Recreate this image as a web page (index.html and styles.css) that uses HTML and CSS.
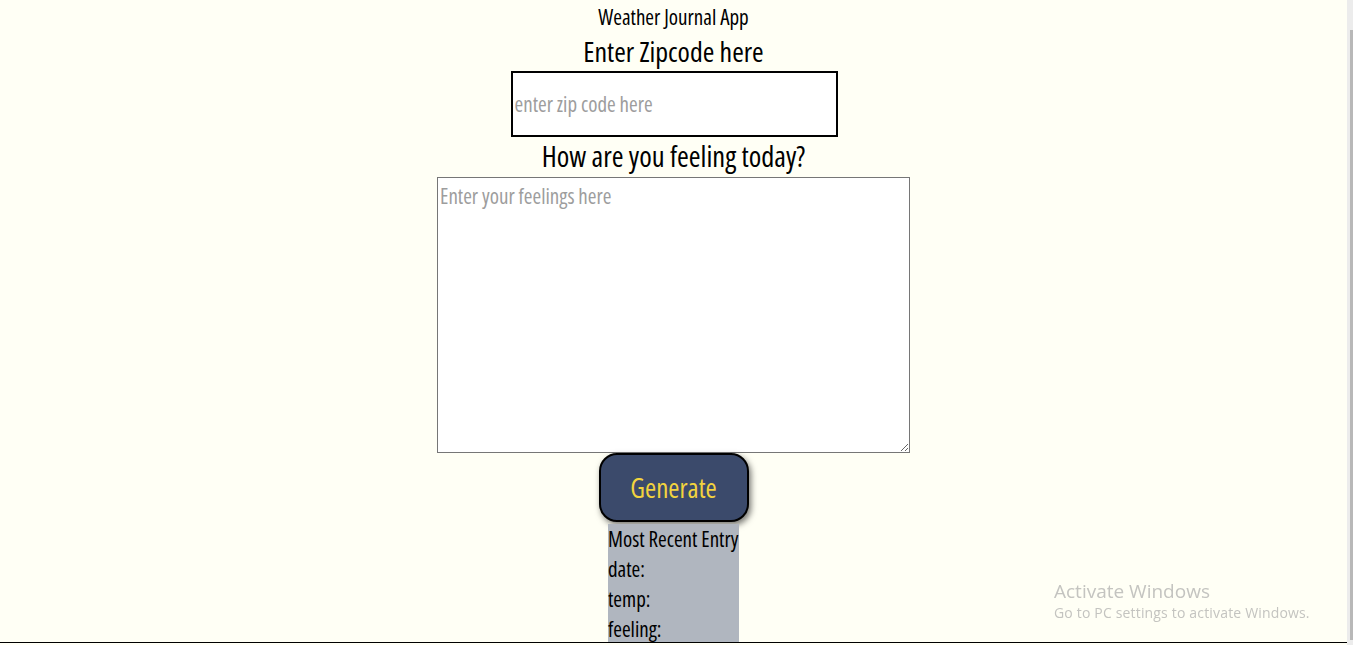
FILE: index.html
```html
<!DOCTYPE html>
<html lang="en">
<head>
<meta charset="utf-8">
<title>Weather Journal App</title>
<link rel="stylesheet" href="styles.css">
</head>
<body>
<main class="app">
  <div class="title">Weather Journal App</div>
  <label class="label zip-label" for="zip">Enter Zipcode here</label>
  <input class="zip" id="zip" type="text" placeholder="enter zip code here">
  <label class="label feel-label" for="feelings">How are you feeling today?</label>
  <textarea class="feelings" id="feelings" placeholder="Enter your feelings here"></textarea>
  <button class="generate" type="button">Generate</button>
  <section class="entry">
    <div class="entry-line">Most Recent Entry</div>
    <div class="entry-line">date:</div>
    <div class="entry-line">temp:</div>
    <div class="entry-line">feeling:</div>
  </section>
</main>
<div class="watermark">
  <div class="wm-title">Activate Windows</div>
  <div class="wm-sub">Go to PC settings to activate Windows.</div>
</div>
<div class="bottom-line"></div>
<div class="scrollbar"><div class="thumb"></div></div>
</body>
</html>
```
FILE: styles.css
```css
html, body {
  margin: 0;
  padding: 0;
  height: 100%;
  overflow: hidden;
}
body {
  background: #fffff5;
  font-family: "Open Sans", "Liberation Sans", sans-serif;
  font-stretch: 75%;
  font-weight: 500;
  color: #000;
}
.app {
  display: flex;
  flex-direction: column;
  align-items: center;
  padding-top: 4px;
  padding-right: 6px;
}
.title {
  font-size: 21px;
  line-height: 26px;
}
.label {
  font-size: 28px;
  line-height: 38px;
}
.zip-label {
  margin-top: 2px;
}
.zip {
  box-sizing: border-box;
  width: 327px;
  height: 66px;
  border: 2px solid #000;
  background: #fff;
  padding: 0 2px;
  font-family: inherit;
  font-stretch: 75%;
  font-weight: 500;
  font-size: 21px;
  outline: none;
  margin: 1px 0 0 1px;
}
.zip::placeholder, .feelings::placeholder {
  color: #9d9d9d;
}
.feel-label {
  font-size: 28.5px;
  margin-top: 0;
  margin-bottom: 2px;
}
.feelings {
  box-sizing: border-box;
  width: 473px;
  height: 276px;
  border: 1px solid #767676;
  background: #fff;
  padding: 4px 2px;
  font-family: inherit;
  font-stretch: 75%;
  font-weight: 500;
  font-size: 21px;
  margin: 0;
}
.generate {
  box-sizing: border-box;
  width: 150px;
  height: 69px;
  margin-top: 0;
  background: #3b4a6b;
  color: #f2d33e;
  border: 2px solid #000;
  border-radius: 18px;
  box-shadow: 2px 3px 6px rgba(0,0,0,0.55);
  font-family: inherit;
  font-stretch: 75%;
  font-weight: 500;
  font-size: 27px;
}
.entry {
  margin-top: 2px;
  width: 131px;
  background: #b0b6bf;
  padding-top: 0;
  padding-bottom: 20px;
}
.entry-line {
  font-size: 21px;
  line-height: 30px;
  white-space: nowrap;
}
.watermark {
  position: fixed;
  left: 1054px;
  top: 579px;
  color: #c4c4c0;
  font-family: "Open Sans", "Liberation Sans", sans-serif;
  font-stretch: 100%;
  font-weight: 400;
}
.wm-title {
  font-size: 19px;
  line-height: 24px;
}
.wm-sub {
  font-size: 14px;
  line-height: 20px;
  letter-spacing: 0.17px;
}
.bottom-line {
  position: fixed;
  left: 0;
  right: 6px;
  top: 642px;
  height: 3px;
  border-top: 1px solid #000;
  background: #fffff5;
}
.scrollbar {
  position: fixed;
  top: 0;
  right: 0;
  width: 6px;
  height: 645px;
  background: #ececec;
}
.thumb {
  position: absolute;
  right: 0;
  top: 30px;
  width: 3px;
  height: 610px;
  background: #b8b8b8;
}
```
